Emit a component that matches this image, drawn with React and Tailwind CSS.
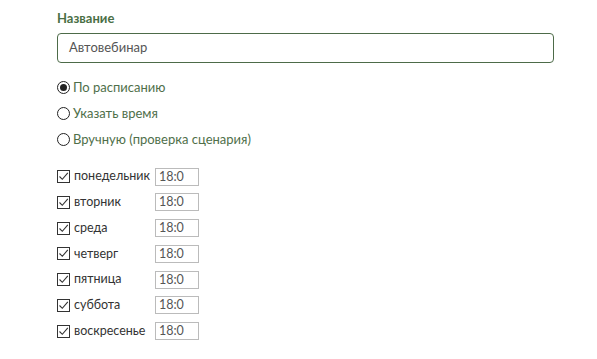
import React from 'react';

const days = ['понедельник', 'вторник', 'среда', 'четверг', 'пятница', 'суббота', 'воскресенье'];
const modes = ['По расписанию', 'Указать время', 'Вручную (проверка сценария)'];

const Radio = ({ checked }) => (
  <span className="w-[13px] h-[13px] rounded-full border border-[#222] flex items-center justify-center shrink-0">
    {checked && <span className="w-[7px] h-[7px] rounded-full bg-[#222]" />}
  </span>
);

const Check = () => (
  <span className="w-[13px] h-[13px] border border-[#333] flex items-center justify-center shrink-0 bg-white">
    <svg width="11" height="11" viewBox="0 0 11 11" fill="none">
      <path d="M1.5 5.5 L4.3 8.3 L9.8 1.8" stroke="#333" strokeWidth="1.1" />
    </svg>
  </span>
);

export default function App() {
  return (
    <div className="bg-white w-[597px] h-[359px] pl-[57px] pt-[11px]" style={{ fontFamily: 'Lato, sans-serif' }}>
      <div className="text-[13px] font-bold text-[#4a6f45] leading-[14px]">Название</div>
      <div className="mt-[8px] w-[497px] h-[30px] border border-[#4d6b49] rounded-[4px] flex items-center pl-[11px] text-[13px] text-[#555]">
        Автовебинар
      </div>

      {/* Режим запуска */}
      <div className="mt-[18px] flex flex-col gap-[13px]">
        {modes.map((m, i) => (
          <div key={m} className="flex items-center gap-[3px] h-[13px] text-[13px] text-[#4f6f4a]">
            <Radio checked={i === 0} />
            <span>{m}</span>
          </div>
        ))}
      </div>

      {/* Дни недели */}
      <div className="mt-[22px] flex flex-col gap-[8.8px]">
        {days.map((d) => (
          <div key={d} className="flex items-center h-[17px]">
            <Check />
            <span className="ml-[4px] w-[81px] text-[12.5px] text-[#333]">{d}</span>
            <span className="w-[44px] h-[18px] border border-[#bbb] text-[12.5px] text-[#555] pl-[3px] leading-[16px]">18:0</span>
          </div>
        ))}
      </div>
    </div>
  );
}
